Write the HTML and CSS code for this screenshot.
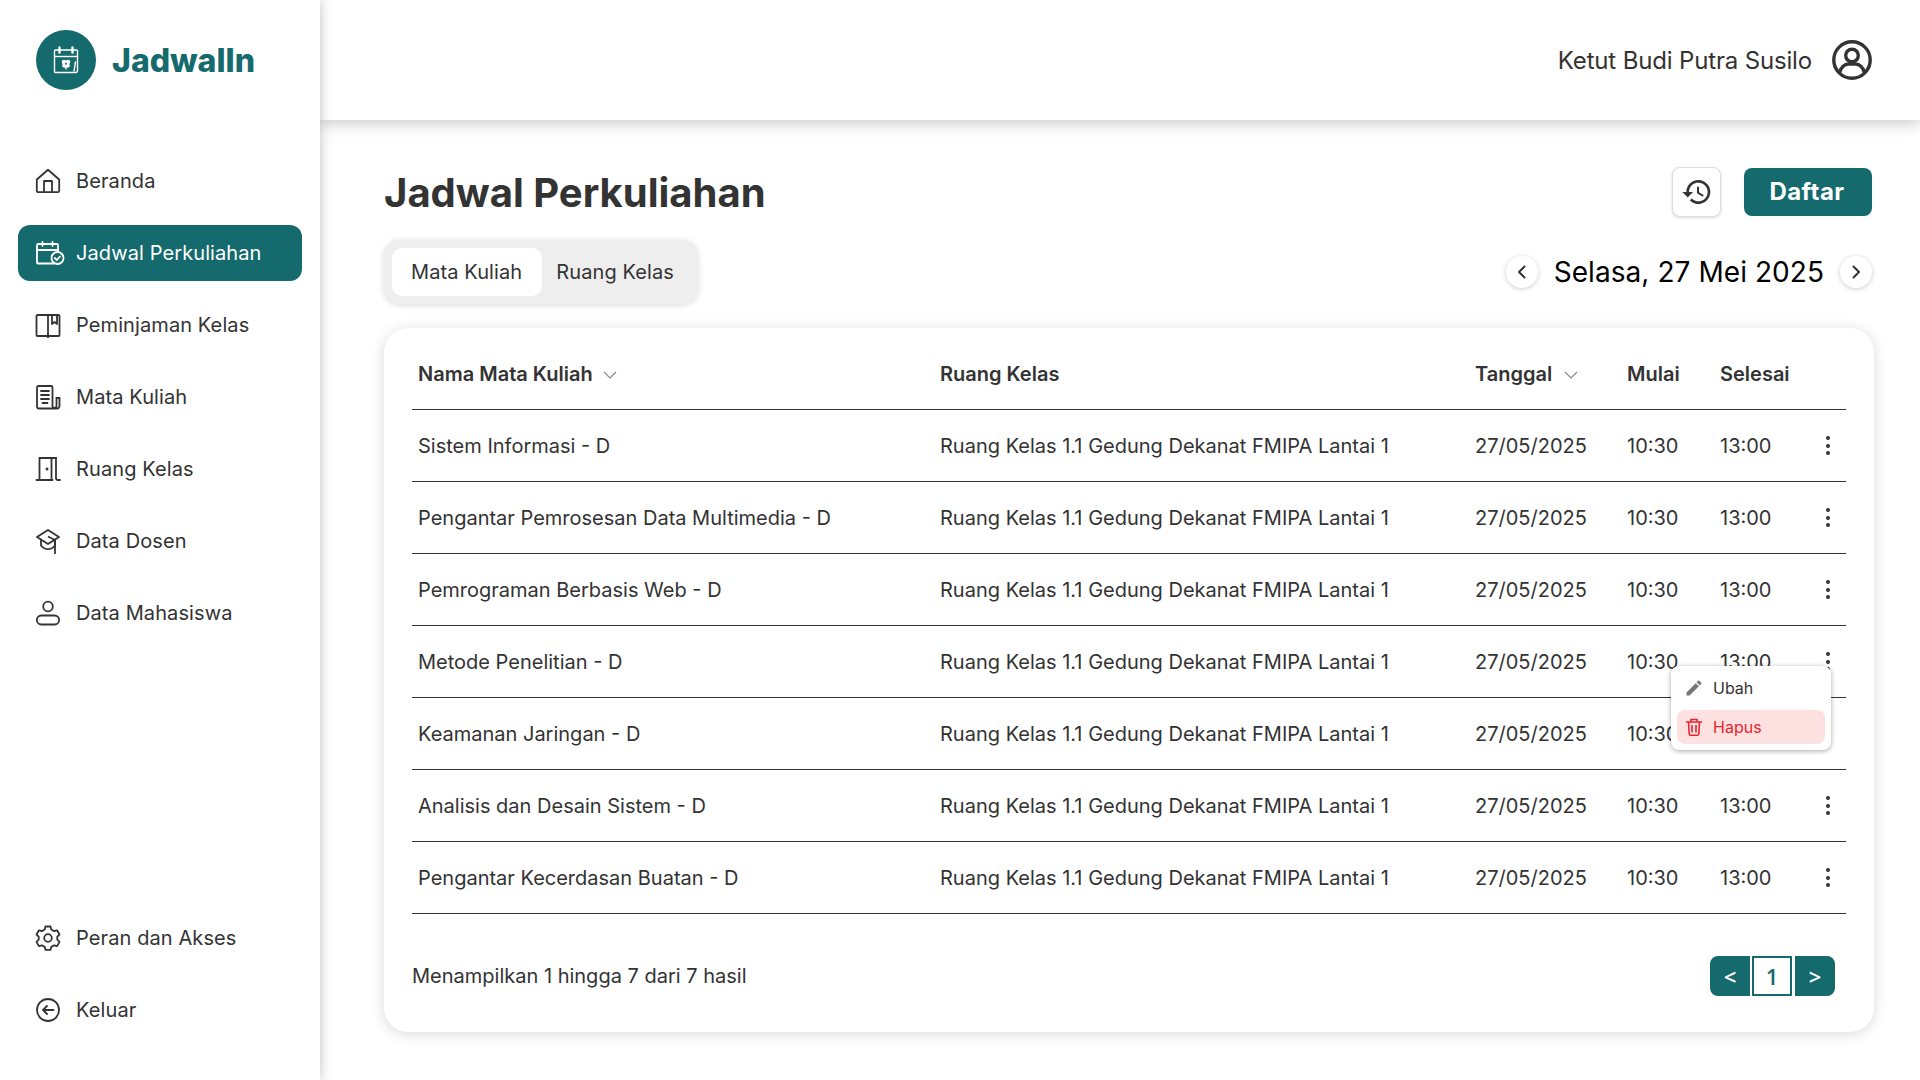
FILE: index.html
```html
<!DOCTYPE html>
<html lang="id">
<head>
    <meta charset="UTF-8">
    <meta name="viewport" content="width=device-width, initial-scale=1.0">
    <title>JadwalIn</title>
    <link rel="stylesheet" href="styles.css">
</head>
<body>
    <div class="app">
        <aside class="sidebar">
            <div class="brand">
                <span class="brand-logo">
                    <svg width="30" height="30" viewBox="0 0 30 30" fill="none" stroke="#fff" stroke-width="1.4">
                        <path d="M24 27.500H4.500a1 1 0 0 1-1-1V6a1 1 0 0 1 1-1h21a1 1 0 0 1 1 1v20a1.500 1.500 0 0 1-1.500 1.500z"/>
                        <path d="M3.500 11.500h23"/>
                        <path d="M8.500 2.500v5M21.500 2.500v5" stroke-width="2.400" stroke-linecap="round"/>
                        <g fill="#fff" stroke="none">
                            <circle cx="13" cy="17" r="2.300"/><circle cx="17" cy="17" r="2.300"/><circle cx="13.500" cy="20.500" r="2.300"/><circle cx="16.500" cy="20.500" r="2.300"/>
                        </g>
                        <circle cx="15" cy="18.800" r="1" fill="#156a6d" stroke="none"/>
                        <path d="M15 21v3.500M24.500 16.500l-1.500 10"/>
                    </svg>
                </span>
                <span class="brand-name">JadwalIn</span>
            </div>
            <nav class="nav">
                <div class="nav-group">
                    <a class="nav-item">
                        <svg class="nav-icon" viewBox="0 0 24 24" fill="none" stroke="currentColor" stroke-linejoin="round">
                            <path d="M0.800 10.500 12 0.800l11.200 9.700v11.200a1.500 1.500 0 0 1-1.500 1.500H2.300a1.500 1.500 0 0 1-1.500-1.500z"/>
                            <path d="M8 23v-11h8v11"/>
                        </svg>
                        Beranda
                    </a>
                    <a class="nav-item active">
                        <svg class="nav-icon wide" viewBox="0 0 28 24" fill="none" stroke="currentColor" stroke-linecap="round">
                            <path d="M18 22.500H2a1 1 0 0 1-1-1V4a1 1 0 0 1 1-1h19a1 1 0 0 1 1 1v7"/>
                            <path d="M1 9h21M6.500 0.800v4M16.500 0.800v4"/>
                            <circle cx="21.500" cy="17" r="6"/>
                            <path d="m18.800 17 2 2 3.200-3.500"/>
                        </svg>
                        Jadwal Perkuliahan
                    </a>
                    <a class="nav-item">
                        <svg class="nav-icon" viewBox="0 0 24 24" fill="none" stroke="currentColor" stroke-linejoin="round">
                            <path d="M12 2H1.500a1 1 0 0 0-1 1v19a1 1 0 0 0 1 1H22.500a1 1 0 0 0 1-1V3a1 1 0 0 0-1-1z"/>
                            <path d="M12 2v23"/>
                            <path d="M16 2v9l2.500-2 2.500 2V2"/>
                        </svg>
                        Peminjaman Kelas
                    </a>
                    <a class="nav-item">
                        <svg class="nav-icon" viewBox="0 0 24 24" fill="none" stroke="currentColor" stroke-linecap="round">
                            <path d="M1 22V2.500A1.500 1.500 0 0 1 2.500 1H15a1.500 1.500 0 0 1 1.500 1.500V21a2 2 0 0 0 4 0v-8H23.500v8a2.500 2.500 0 0 1-2.500 2.500H3A2 2 0 0 1 1 22z"/>
                            <path d="M5 6h8M5 10h8M5 14h8M6.500 18h5"/>
                        </svg>
                        Mata Kuliah
                    </a>
                    <a class="nav-item">
                        <svg class="nav-icon" viewBox="0 0 24 24" fill="none" stroke="currentColor" stroke-linecap="round">
                            <path d="M0.500 23H16.500M3.500 23V1H15.500V23"/>
                            <path d="M15.500 1H20V21a2 2 0 0 0 2 2h2"/>
                            <circle cx="11" cy="12" r="0.600" fill="currentColor"/>
                        </svg>
                        Ruang Kelas
                    </a>
                    <a class="nav-item">
                        <svg class="nav-icon" viewBox="0 0 24 24" fill="none" stroke="currentColor" stroke-linejoin="round">
                            <path d="M12 1 1 8l11 7 11-7z"/>
                            <path d="M5 10.500v6c2 2.500 4.500 3.700 7 3.700s5-1.200 7-3.700v-6"/>
                            <path d="M12 7.500l7 3.500V25"/>
                        </svg>
                        Data Dosen
                    </a>
                    <a class="nav-item">
                        <svg class="nav-icon" viewBox="0 0 24 24" fill="none" stroke="currentColor">
                            <circle cx="12" cy="5.500" r="4.800"/>
                            <rect x="0.800" y="14.500" width="22.400" height="9" rx="4.500"/>
                        </svg>
                        Data Mahasiswa
                    </a>
                </div>
                <div class="nav-group">
                    <a class="nav-item">
                        <svg class="nav-icon" viewBox="0 0 24 24" fill="none" stroke="currentColor" stroke-linejoin="round">
                            <path d="M9.500 1.500h5l.8 3 2.800 1.600 3-.8 2.400 4.200-2.200 2.200v3l2.200 2.200-2.400 4.200-3-.8-2.800 1.600-.8 3h-5l-.8-3-2.800-1.600-3 .8L.5 16.900l2.200-2.200v-3L.5 9.500l2.400-4.200 3 .8 2.800-1.600z" transform="translate(0 -1)"/>
                            <circle cx="12" cy="12" r="3.800"/>
                        </svg>
                        Peran dan Akses
                    </a>
                    <a class="nav-item">
                        <svg class="nav-icon" viewBox="0 0 24 24" fill="none" stroke="currentColor" stroke-linecap="round" stroke-linejoin="round">
                            <circle cx="12" cy="12" r="11"/>
                            <path d="M17.500 12H7M11 8l-4 4 4 4"/>
                        </svg>
                        Keluar
                    </a>
                </div>
            </nav>
        </aside>

        <div class="page">
            <header class="topbar">
                <span class="user-name">Ketut Budi Putra Susilo</span>
                <svg width="40" height="40" viewBox="0 0 40 40" fill="none" stroke="#333" stroke-width="3.400">
                    <circle cx="20" cy="20" r="18.200"/>
                    <circle cx="20" cy="15.500" r="6.300"/>
                    <path d="M7.500 33c1-5.500 5-9 9-9h7c4 0 8 3.500 9 9"/>
                </svg>
            </header>

            <main class="content">
                <div class="title-row">
                    <h1>Jadwal Perkuliahan</h1>
                    <div class="title-actions">
                        <button class="history-btn">
                            <svg width="32" height="32" viewBox="0 0 24 24" fill="#333">
                                <path d="M13 3a9 9 0 0 0-9 9H1l3.900 3.900.1.140L9 12H6a7 7 0 1 1 2.050 4.950l-1.420 1.420A9 9 0 1 0 13 3zm-1 5v5l4.280 2.540.72-1.210-3.500-2.080V8z"/>
                            </svg>
                        </button>
                        <button class="primary-btn">Daftar</button>
                    </div>
                </div>

                <div class="filter-row">
                    <div class="tabs">
                        <span class="tab active">Mata Kuliah</span>
                        <span class="tab">Ruang Kelas</span>
                    </div>
                    <div class="date-nav">
                        <button class="round-btn">
                            <svg width="16" height="16" viewBox="0 0 16 16" fill="none" stroke="#333" stroke-width="2" stroke-linecap="round" stroke-linejoin="round"><path d="M10.500 2.500 5 8l5.500 5.500"/></svg>
                        </button>
                        <span class="date-label">Selasa, 27 Mei 2025</span>
                        <button class="round-btn">
                            <svg width="16" height="16" viewBox="0 0 16 16" fill="none" stroke="#333" stroke-width="2" stroke-linecap="round" stroke-linejoin="round"><path d="M5.500 2.500 11 8l-5.500 5.500"/></svg>
                        </button>
                    </div>
                </div>

                <section class="card">
                    <table class="schedule">
                        <colgroup>
                            <col class="col-name"><col class="col-room"><col class="col-date"><col class="col-start"><col class="col-end"><col>
                        </colgroup>
                        <thead>
                            <tr>
                                <th>Nama Mata Kuliah <svg class="sort" width="16" height="16" viewBox="0 0 16 16" fill="none" stroke="#888" stroke-width="1.200"><path d="M2 5l6 6 6-6"/></svg></th>
                                <th>Ruang Kelas</th>
                                <th>Tanggal <svg class="sort" width="16" height="16" viewBox="0 0 16 16" fill="none" stroke="#888" stroke-width="1.200"><path d="M2 5l6 6 6-6"/></svg></th>
                                <th>Mulai</th>
                                <th>Selesai</th>
                                <th></th>
                            </tr>
                        </thead>
                        <tbody>
                            <tr>
                                <td>Sistem Informasi - D</td>
                                <td>Ruang Kelas 1.1 Gedung Dekanat FMIPA Lantai 1</td>
                                <td>27/05/2025</td><td>10:30</td><td>13:00</td>
                                <td class="actions"><span class="dots"><i></i><i></i><i></i></span></td>
                            </tr>
                            <tr>
                                <td>Pengantar Pemrosesan Data Multimedia - D</td>
                                <td>Ruang Kelas 1.1 Gedung Dekanat FMIPA Lantai 1</td>
                                <td>27/05/2025</td><td>10:30</td><td>13:00</td>
                                <td class="actions"><span class="dots"><i></i><i></i><i></i></span></td>
                            </tr>
                            <tr>
                                <td>Pemrograman Berbasis Web - D</td>
                                <td>Ruang Kelas 1.1 Gedung Dekanat FMIPA Lantai 1</td>
                                <td>27/05/2025</td><td>10:30</td><td>13:00</td>
                                <td class="actions"><span class="dots"><i></i><i></i><i></i></span></td>
                            </tr>
                            <tr>
                                <td>Metode Penelitian - D</td>
                                <td>Ruang Kelas 1.1 Gedung Dekanat FMIPA Lantai 1</td>
                                <td>27/05/2025</td><td>10:30</td><td>13:00</td>
                                <td class="actions">
                                    <span class="dots"><i></i><i></i><i></i></span>
                                    <div class="menu">
                                        <div class="menu-item">
                                            <svg width="20" height="20" viewBox="0 0 24 24" fill="#777"><path d="M3 17.250V21h3.750L17.810 9.940l-3.750-3.750zM20.710 7.040a1 1 0 0 0 0-1.410l-2.340-2.340a1 1 0 0 0-1.410 0l-1.830 1.830 3.750 3.750z"/></svg>
                                            Ubah
                                        </div>
                                        <div class="menu-item danger">
                                            <svg width="20" height="20" viewBox="0 0 20 20" fill="none" stroke="currentColor" stroke-width="1.600" stroke-linecap="round"><path d="M2.500 5h15M7 4.500V2.500h6v2M4.500 5l.7 12a1.500 1.500 0 0 0 1.500 1.300h6.600a1.500 1.500 0 0 0 1.500-1.300l.7-12M8 8.500v6.500M12 8.500v6.500"/></svg>
                                            Hapus
                                        </div>
                                    </div>
                                </td>
                            </tr>
                            <tr>
                                <td>Keamanan Jaringan - D</td>
                                <td>Ruang Kelas 1.1 Gedung Dekanat FMIPA Lantai 1</td>
                                <td>27/05/2025</td><td>10:30</td><td>13:00</td>
                                <td class="actions"><span class="dots"><i></i><i></i><i></i></span></td>
                            </tr>
                            <tr>
                                <td>Analisis dan Desain Sistem - D</td>
                                <td>Ruang Kelas 1.1 Gedung Dekanat FMIPA Lantai 1</td>
                                <td>27/05/2025</td><td>10:30</td><td>13:00</td>
                                <td class="actions"><span class="dots"><i></i><i></i><i></i></span></td>
                            </tr>
                            <tr>
                                <td>Pengantar Kecerdasan Buatan - D</td>
                                <td>Ruang Kelas 1.1 Gedung Dekanat FMIPA Lantai 1</td>
                                <td>27/05/2025</td><td>10:30</td><td>13:00</td>
                                <td class="actions"><span class="dots"><i></i><i></i><i></i></span></td>
                            </tr>
                        </tbody>
                    </table>

                    <div class="table-footer">
                        <span>Menampilkan 1 hingga 7 dari 7 hasil</span>
                        <div class="pager">
                            <button class="pager-btn first">&lt;</button>
                            <button class="pager-btn current">1</button>
                            <button class="pager-btn last">&gt;</button>
                        </div>
                    </div>
                </section>
            </main>
        </div>
    </div>
</body>
</html>
```

FILE: styles.css
```css
* {
    box-sizing: border-box;
    margin: 0;
    padding: 0;
}
body {
    font-family: Inter, "Liberation Sans", sans-serif;
    background-color: #fff;
    color: #333;
    font-size: 20px;
    overflow: hidden;
}
button {
    font-family: inherit;
    cursor: pointer;
}
.app {
    display: flex;
    height: 1080px;
}
.sidebar {
    width: 320px;
    flex-shrink: 0;
    display: flex;
    flex-direction: column;
    background: #fff;
    box-shadow: 0 0 12px rgba(0,0,0,0.25);
    position: relative;
    z-index: 2;
}
.brand {
    display: flex;
    align-items: center;
    gap: 16px;
    height: 120px;
    padding: 0 36px;
}
.brand-logo {
    width: 60px;
    height: 60px;
    border-radius: 50%;
    background: #156a6d;
    display: flex;
    align-items: center;
    justify-content: center;
}
.brand-name {
    font-size: 32px;
    font-weight: 800;
    color: #156a6d;
}
.nav {
    flex: 1;
    display: flex;
    flex-direction: column;
    justify-content: space-between;
    padding: 33px 18px 42px;
}
.nav-group {
    display: flex;
    flex-direction: column;
    gap: 16px;
}
.nav-item {
    display: flex;
    align-items: center;
    gap: 16px;
    height: 56px;
    padding: 0 18px;
    border-radius: 12px;
    letter-spacing: 0.1px;
}
.nav-item.active {
    background: #156a6d;
    color: #fff;
}
.nav-icon {
    width: 24px;
    height: 24px;
    flex-shrink: 0;
    overflow: visible;
    stroke-width: 1.8;
}
.nav-icon.wide {
    width: 28px;
    margin-right: -4px;
}
.page {
    flex: 1;
    min-width: 0;
}
.topbar {
    height: 120px;
    display: flex;
    align-items: center;
    justify-content: flex-end;
    gap: 20px;
    padding: 0 48px;
    background: #fff;
    box-shadow: 0 4px 14px rgba(0,0,0,0.2);
}
.user-name {
    font-size: 24px;
    letter-spacing: -0.16px;
}
.content {
    padding: 48px 46px 0 64px;
}
.title-row {
    display: flex;
    align-items: center;
    justify-content: space-between;
    padding-right: 2px;
    margin-bottom: 24px;
}
h1 {
    height: 48px;
    padding-top: 1px;
    font-size: 40px;
    line-height: 48px;
    font-weight: 700;
}
.title-actions {
    display: flex;
    align-items: center;
    gap: 23px;
    height: 48px;
}
.history-btn {
    width: 49px;
    height: 50px;
    display: flex;
    align-items: center;
    justify-content: center;
    background: #fff;
    border: 1px solid #ddd;
    border-radius: 8px;
    box-shadow: 0 1px 3px rgba(0,0,0,0.15);
}
.primary-btn {
    width: 128px;
    height: 48px;
    padding: 0 2px 2px 0;
    border: 0;
    border-radius: 8px;
    background: #156a6d;
    color: #fff;
    font-size: 24px;
    font-weight: 700;
    letter-spacing: 0.4px;
}
.filter-row {
    display: flex;
    align-items: center;
    justify-content: space-between;
    padding-right: 2px;
    margin-bottom: 24px;
}
.tabs {
    display: flex;
    height: 64px;
    padding: 8px;
    background: #eee;
    border-radius: 16px;
    box-shadow: 0 1px 6px rgba(0,0,0,0.15);
    letter-spacing: 0.1px;
}
.tab {
    display: flex;
    align-items: center;
    padding: 0 20px 0 19px;
    border-radius: 10px;
}
.tab.active {
    background: #fff;
}
.tab:last-child {
    padding: 0 16px 0 14px;
}
.date-nav {
    display: flex;
    align-items: center;
    gap: 16px;
}
.date-label {
    font-size: 28px;
    letter-spacing: 0.06px;
    color: #000;
}
.round-btn {
    width: 32px;
    height: 32px;
    display: flex;
    align-items: center;
    justify-content: center;
    border: 0;
    border-radius: 50%;
    background: #fff;
    box-shadow: 0 1px 5px rgba(0,0,0,0.2);
}
.card {
    background: #fff;
    border-radius: 24px;
    box-shadow: 0 2px 14px rgba(0,0,0,0.15);
    padding: 1px 28px 0;
    height: 704px;
}
.schedule {
    width: 100%;
    table-layout: fixed;
    border-collapse: collapse;
}
.col-name { width: 522px; }
.col-room { width: 535px; }
.col-date { width: 152px; }
.col-start { width: 93px; }
.col-end { width: 93px; }
.schedule th, .schedule td {
    text-align: left;
    padding: 0 6px;
    border-bottom: 1.5px solid #333;
    white-space: nowrap;
}
.schedule th {
    height: 80px;
    padding-top: 11px;
    font-weight: 600;
}
.schedule td {
    height: 72px;
    padding-top: 2px;
}
.sort {
    margin-left: 6px;
    vertical-align: -2px;
}
.schedule th:first-child .sort {
    margin-left: 4px;
}
.schedule td.actions {
    position: relative;
    text-align: right;
}
.dots {
    display: inline-flex;
    flex-direction: column;
    gap: 3.5px;
    margin-right: 10px;
    vertical-align: middle;
    position: relative;
    top: -2px;
}
.dots i {
    width: 4px;
    height: 4px;
    border-radius: 50%;
    background: #333;
}
.menu {
    position: absolute;
    top: 40px;
    right: 15px;
    width: 160px;
    height: 84px;
    padding: 6px;
    background: #fff;
    border-radius: 8px;
    box-shadow: 0 1px 5px rgba(0,0,0,0.35);
    z-index: 3;
    text-align: left;
    font-size: 16px;
}
.menu-item {
    display: flex;
    align-items: center;
    gap: 9px;
    height: 32px;
    padding: 0 7px;
    margin-bottom: 6px;
    border-radius: 8px;
}
.menu-item.danger {
    height: 34px;
    margin-bottom: 0;
    background: #fde0e0;
    color: #e9252c;
}
.table-footer {
    display: flex;
    align-items: center;
    justify-content: space-between;
    margin-top: 42px;
    padding-right: 11px;
}
.pager {
    display: flex;
    gap: 2px;
}
.pager-btn {
    width: 40px;
    height: 40px;
    border: 2px solid #156a6d;
    background: #156a6d;
    color: #fff;
    font-family: "Open Sans", sans-serif;
    font-size: 22px;
    font-weight: 600;
}
.pager-btn.first {
    border-radius: 8px 0 0 8px;
}
.pager-btn.last {
    border-radius: 0 8px 8px 0;
    margin-left: 1px;
}
.pager-btn.current {
    background: #fff;
    color: #156a6d;
}
```
